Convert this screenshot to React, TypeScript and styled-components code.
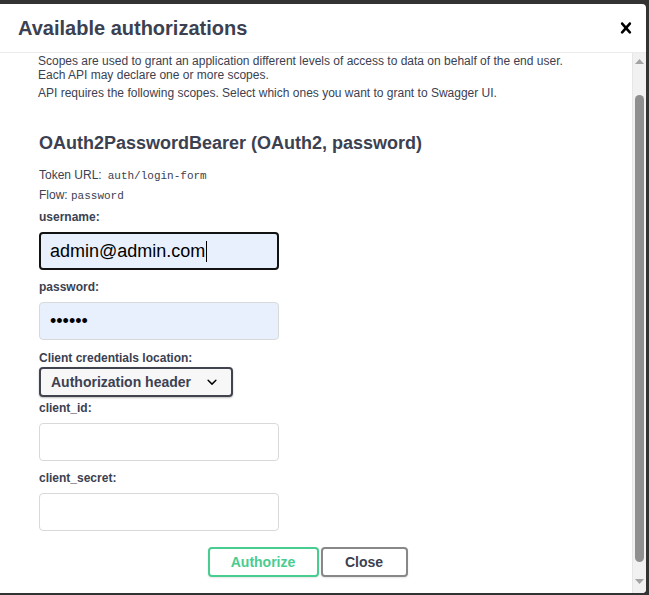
import React from "react";
import styled, { createGlobalStyle } from "styled-components";

const Global = createGlobalStyle`
  html, body { margin: 0; padding: 0; background: #333; overflow: hidden; }
  body { font-family: "Liberation Sans", Arial, sans-serif; color: #3b4151; }
  * { box-sizing: border-box; }
`;

const Stage = styled.div`
  width: 649px;
  height: 595px;
  padding-top: 4px;
`;

const Modal = styled.div`
  width: 646px;
  height: 589px;
  background: #fff;
  border-radius: 0 4px 4px 0;
  display: flex;
  flex-direction: column;
  overflow: hidden;
`;

const Header = styled.div`
  height: 49px;
  flex: none;
  display: flex;
  align-items: center;
  justify-content: space-between;
  padding: 0 9px 0 18px;
  border-bottom: 1px solid #ebebeb;
`;

const Title = styled.h3`
  margin: 0;
  font-size: 20px;
  font-weight: 700;
  color: #3b4151;
`;

const CloseIcon = styled.button`
  border: 0;
  background: none;
  padding: 0;
  width: 22px;
  height: 22px;
  display: flex;
  align-items: center;
  justify-content: center;
  svg { display: block; }
`;

const Body = styled.div`
  flex: 1;
  display: flex;
  min-height: 0;
`;

const Content = styled.div`
  flex: 1;
  padding: 2px 0 0 39px;
  display: flex;
  flex-direction: column;
  align-items: flex-start;
`;

const Note = styled.p<{ $gap?: number }>`
  margin: 0 0 ${(p) => p.$gap ?? 0}px -1px;
  font-size: 12px;
  line-height: 13.8px;
  color: #3b4151;
`;

const Heading = styled.h4`
  margin: 33px 0 13px;
  font-size: 18px;
  line-height: 20px;
  font-weight: 700;
  color: #3b4151;
`;

const Meta = styled.div`
  font-size: 12px;
  line-height: 19px;
  color: #3b4151;
`;

const Code = styled.code<{ $gap?: number }>`
  font-family: "Liberation Mono", "DejaVu Sans Mono", monospace;
  font-size: 11px;
  margin-left: ${(p) => p.$gap ?? 0}px;
`;

const Label = styled.label<{ $mb?: number; $mt?: number }>`
  display: block;
  font-size: 12px;
  line-height: 14px;
  font-weight: 700;
  margin: ${(p) => p.$mt ?? 0}px 0 ${(p) => p.$mb ?? 8}px;
  color: #3b4151;
`;

const Field = styled.div<{ $focused?: boolean; $filled?: boolean; $mb?: number }>`
  width: 240px;
  height: 38px;
  margin-bottom: ${(p) => p.$mb ?? 11}px;
  border-radius: 4px;
  border: ${(p) => (p.$focused ? "2px solid #121212" : "1px solid #d9d9d9")};
  background: ${(p) => (p.$filled ? "#e8f0fe" : "#fff")};
  padding: 0 ${(p) => (p.$focused ? 9 : 10)}px;
  display: flex;
  align-items: center;
  font-size: 18px;
  color: #000;
`;

const Caret = styled.span`
  display: inline-block;
  width: 1px;
  height: 21px;
  background: #000;
  margin-left: 1px;
`;

const Dots = styled.span`
  font-size: 18px;
  color: #000;
`;

const Select = styled.div`
  width: 194px;
  height: 30px;
  margin-bottom: 4px;
  border: 2px solid #41444e;
  border-radius: 4px;
  background: #f7f7f7;
  box-shadow: 0 1px 2px 0 rgba(0, 0, 0, 0.25);
  padding: 0 9px 0 10px;
  display: flex;
  align-items: center;
  justify-content: space-between;
  font-size: 14px;
  font-weight: 700;
  color: #3b4151;
`;

const ButtonRow = styled.div`
  align-self: stretch;
  display: flex;
  justify-content: center;
  padding: 5px 56px 0 0;
`;

const Btn = styled.button<{ $variant: "ok" | "close"; $w: number }>`
  width: ${(p) => p.$w}px;
  height: 30px;
  padding: 0;
  border-radius: 4px;
  background: #fff;
  font-family: "Liberation Sans", Arial, sans-serif;
  font-size: 14px;
  font-weight: 700;
  box-shadow: 0 1px 2px rgba(0, 0, 0, 0.1);
  border: 2px solid ${(p) => (p.$variant === "ok" ? "#49cc90" : "#888")};
  color: ${(p) => (p.$variant === "ok" ? "#49cc90" : "#3b4151")};
  margin-left: ${(p) => (p.$variant === "close" ? 2 : 0)}px;
`;

const Scrollbar = styled.div`
  width: 14px;
  flex: none;
  background: #f1f1f1;
  border-left: 1px solid #e6e6e6;
  display: flex;
  flex-direction: column;
  align-items: center;
  padding-bottom: 3px;
`;

const Arrow = styled.div`
  height: 17px;
  display: flex;
  align-items: center;
  justify-content: center;
`;

const Track = styled.div`
  flex: 1;
  width: 100%;
  display: flex;
  flex-direction: column;
  align-items: center;
  padding-top: 25px;
  padding-bottom: 11px;
`;

const Thumb = styled.div`
  width: 9px;
  flex: 1;
  background: #8f8f8f;
  border-radius: 5px;
`;

const Tri = ({ up }: { up?: boolean }) => (
  <svg width="9" height="5" viewBox="0 0 9 5">
    <path d={up ? "M0 5 L4.5 0 L9 5 Z" : "M0 0 L9 0 L4.5 5 Z"} fill="#a3a3a3" />
  </svg>
);

export default function App() {
  return (
    <>
      <Global />
      <Stage>
        <Modal>
          <Header>
            <Title>Available authorizations</Title>
            <CloseIcon aria-label="Close">
              <svg width="22" height="22" viewBox="0 0 20 20">
                <path
                  fill="#000"
                  d="M14.348 14.849c-.469.469-1.229.469-1.697 0L10 11.819l-2.651 3.029c-.469.469-1.229.469-1.697 0-.469-.469-.469-1.229 0-1.697l2.758-3.15-2.759-3.152c-.469-.469-.469-1.228 0-1.697.469-.469 1.228-.469 1.697 0L10 8.183l2.651-3.031c.469-.469 1.228-.469 1.697 0 .469.469.469 1.229 0 1.697l-2.758 3.152 2.758 3.15c.469.469.469 1.229 0 1.698z"
                />
              </svg>
            </CloseIcon>
          </Header>
          <Body>
            <Content>
              <Note $gap={4}>
                Scopes are used to grant an application different levels of access to data on behalf of the end user.
                <br />
                Each API may declare one or more scopes.
              </Note>
              <Note>API requires the following scopes. Select which ones you want to grant to Swagger UI.</Note>
              <Heading>OAuth2PasswordBearer (OAuth2, password)</Heading>
              <Meta>
                Token URL:<Code $gap={6}>auth/login-form</Code>
              </Meta>
              <Meta>
                Flow: <Code>password</Code>
              </Meta>
              <Label $mt={4}>username:</Label>
              <Field $focused $filled $mb={10}>
                admin@admin.com
                <Caret />
              </Field>
              <Label>password:</Label>
              <Field $filled $mb={11}>
                <Dots>••••••</Dots>
              </Field>
              <Label $mb={2}>Client credentials location:</Label>
              <Select>
                <span>Authorization header</span>
                <svg width="20" height="20" viewBox="0 0 20 20">
                  <path
                    fill="#000"
                    d="M13.418 7.859a.695.695 0 01.978 0 .68.68 0 010 .969l-3.908 3.83a.697.697 0 01-.979 0l-3.908-3.83a.68.68 0 010-.969.695.695 0 01.978 0L10 11l3.418-3.141z"
                  />
                </svg>
              </Select>
              <Label>client_id:</Label>
              <Field $mb={10} />
              <Label>client_secret:</Label>
              <Field />
              <ButtonRow>
                <Btn $variant="ok" $w={111}>Authorize</Btn>
                <Btn $variant="close" $w={87}>Close</Btn>
              </ButtonRow>
            </Content>
            <Scrollbar>
              <Arrow>
                <Tri up />
              </Arrow>
              <Track>
                <Thumb />
              </Track>
              <Arrow>
                <Tri />
              </Arrow>
            </Scrollbar>
          </Body>
        </Modal>
      </Stage>
    </>
  );
}
